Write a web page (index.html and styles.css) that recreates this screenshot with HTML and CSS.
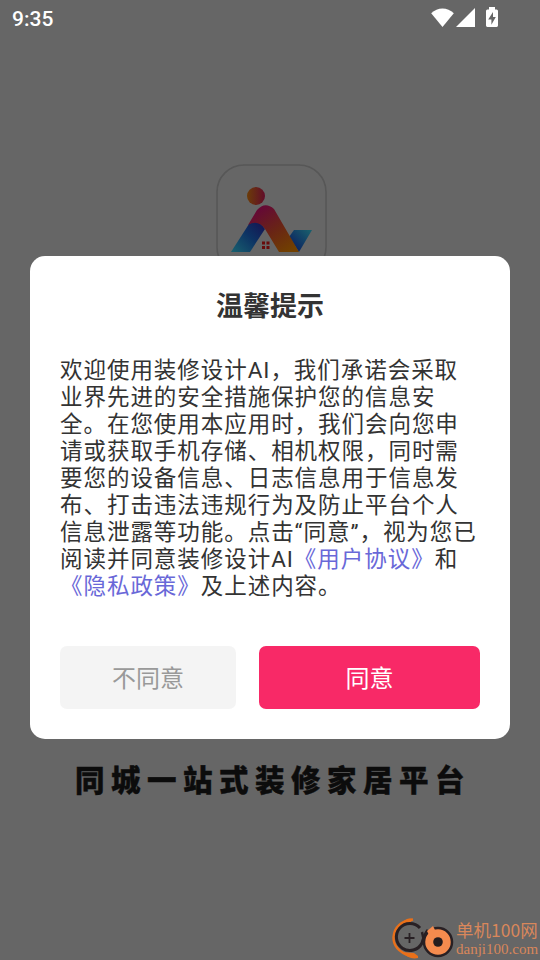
FILE: index.html
```html
<!DOCTYPE html>
<html lang="zh-CN">
<head>
<meta charset="utf-8">
<title>装修设计AI</title>
<link rel="stylesheet" href="styles.css">
</head>
<body>
<div class="screen">
  <header class="status">
    <span class="clock">9:35</span>
    <svg class="status-icons" width="70" height="24" viewBox="0 0 70 24" fill="#fff">
      <path d="M1.2 5.2C7.5-1.1 17.5-1.1 23.8 5.2L12.500 19Z"/>
      <path d="M26 19L45 0V19Z"/>
      <path fill-rule="evenodd" d="M59 -1H65V1.500H66.600Q68 1.500 68 3V17.600Q68 19 66.600 19H57.400Q56 19 56 17.600V3Q56 1.500 57.400 1.500H59ZM63 4L58.200 11.500H61.400V16.800L65.800 9H63Z"/>
    </svg>
  </header>
  <main class="splash">
    <svg class="logo" width="112" height="112" viewBox="0 0 112 112">
      <defs>
        <linearGradient id="head"><stop offset="0" stop-color="#6b3c08"/><stop offset="1" stop-color="#610c29"/></linearGradient>
        <linearGradient id="body" gradientUnits="userSpaceOnUse" x1="44" y1="46" x2="72" y2="88"><stop offset="0" stop-color="#650a34"/><stop offset=".5" stop-color="#692515"/><stop offset="1" stop-color="#714000"/></linearGradient>
        <linearGradient id="leg" gradientUnits="userSpaceOnUse" x1="18" y1="88" x2="46" y2="60"><stop offset="0" stop-color="#185e6e"/><stop offset=".55" stop-color="#0d3363"/><stop offset="1" stop-color="#141754"/></linearGradient>
        <linearGradient id="arm" gradientUnits="userSpaceOnUse" x1="94" y1="67" x2="76" y2="85"><stop offset="0" stop-color="#195d6c"/><stop offset="1" stop-color="#0a1e60"/></linearGradient>
      </defs>
      <rect x="1" y="1" width="109" height="109" rx="27" fill="#666" stroke="#575757" stroke-width="1.6"/>
      <circle cx="40" cy="32" r="9" fill="url(#head)"/>
      <path d="M78 66H96L83 88L73 73Z" fill="url(#arm)"/>
      <path d="M15 88L33 60Q41 53 49 65L34 88Z" fill="url(#leg)"/>
      <path d="M32 61L41 46Q49 37 58 45L83 88H63L49 65Q42 55 32 61Z" fill="url(#body)"/>
      <path d="M46 77.500h3v3h-3zM50.500 77.500h3v3h-3zM46 82h3v3h-3zM50.500 82h3v3h-3z" fill="#680b0b"/>
    </svg>
    <p class="slogan">同城一站式装修家居平台</p>
  </main>
  <section class="dialog" role="dialog">
    <h1>温馨提示</h1>
    <p class="message">欢迎使用装修设计AI，我们承诺会采取<br>业界先进的安全措施保护您的信息安<br>全。在您使用本应用时，我们会向您申<br>请或获取手机存储、相机权限，同时需<br>要您的设备信息、日志信息用于信息发<br>布、打击违法违规行为及防止平台个人<br>信息泄露等功能。点击“同意”，视为您已<br>阅读并同意装修设计AI<a>《用户协议》</a>和<br><a>《隐私政策》</a>及上述内容。</p>
    <div class="actions">
      <button class="decline">不同意</button>
      <button class="accept">同意</button>
    </div>
  </section>
  <aside class="watermark">
    <svg width="66" height="44" viewBox="0 0 66 44" fill="none">
      <path d="M23 3.500Q5 6 3.500 21Q3 34 20 40" stroke="#e9701a" stroke-width="2.400"/>
      <path d="M11 7Q17 1 23 3L20 7ZM12 36Q19 44 28 42L28 40L24 37Z" fill="#e9701a"/>
      <path d="M30 12A13.500 13.500 0 1 0 32 27Q35 17 38 14" stroke="#282024" stroke-width="3"/>
      <path d="M32 16Q34 22 33 27" stroke="#282024" stroke-width="2.500"/>
      <path d="M19.500 17v10M14.500 22h10" stroke="#282024" stroke-width="1.800"/>
      <circle cx="48" cy="26" r="14" fill="#f58b4e" stroke="#282024" stroke-width="2.500"/>
      <path d="M37 15L43 10L45 14L39 19Z" fill="#f58b4e"/>
      <circle cx="48" cy="26" r="4.800" fill="#241c1e"/>
    </svg>
    <div class="site"><span class="site-name">单机100网</span><span class="site-url">danji100.com</span></div>
  </aside>
</div>
</body>
</html>
```
FILE: styles.css
```css
* { box-sizing: border-box; }
body { margin: 0; }
.screen {
  position: relative;
  width: 540px;
  height: 960px;
  overflow: hidden;
  background: #666;
  font-family: Roboto, "Noto Sans CJK SC", sans-serif;
}
.status {
  display: flex;
  justify-content: space-between;
  align-items: flex-start;
  height: 36px;
  padding: 8px 40px 0 12px;
}
.status-icons { overflow: visible; }
.clock {
  margin-top: -1px;
  font-size: 21px;
  line-height: 24px;
  font-weight: 500;
  color: #fff;
}
.splash {
  display: flex;
  flex-direction: column;
  align-items: center;
  padding-top: 128px;
}
.logo { margin-left: 3px; }
.slogan {
  margin: 480px 0 0 6px;
  font-family: "Noto Sans CJK SC", sans-serif;
  font-size: 29.5px;
  font-weight: 900;
  line-height: 44px;
  letter-spacing: 6.5px;
  white-space: nowrap;
  color: #0c0c0c;
  -webkit-text-stroke: .4px #0c0c0c;
}
.dialog {
  position: absolute;
  top: 256px;
  left: 30px;
  width: 480px;
  height: 483px;
  padding: 33px 30px 30px;
  border-radius: 15px;
  background: #fff;
  color: #333;
}
.dialog h1 {
  margin: 0;
  font-size: 27px;
  line-height: 36px;
  font-weight: 700;
  text-align: center;
}
.message {
  margin: 32px 0 0;
  font-size: 22.5px;
  line-height: 27px;
  letter-spacing: .96px;
  white-space: nowrap;
}
.message a { color: #6968d8; }
.actions {
  display: grid;
  grid-template-columns: 176px 221px;
  gap: 23px;
  margin-top: 46px;
}
.actions button {
  height: 63px;
  padding: 4px 0 0;
  border: 0;
  border-radius: 7px;
  font: 24px/59px Roboto, "Noto Sans CJK SC", sans-serif;
}
.decline { background: #f4f4f4; color: #999; }
.accept { background: #f82967; color: #fff; }
.watermark {
  position: absolute;
  left: 390px;
  top: 916px;
  display: flex;
  width: 150px;
  height: 44px;
  color: #d9875b;
}
.watermark svg { flex: none; }
.site { display: flex; flex-direction: column; white-space: nowrap; }
.site-name {
  font: 17.5px/27px "Noto Sans CJK SC", sans-serif;
}
.site-url {
  margin-top: -1px;
  font: 15px/15px "Liberation Serif", serif;
}
```
